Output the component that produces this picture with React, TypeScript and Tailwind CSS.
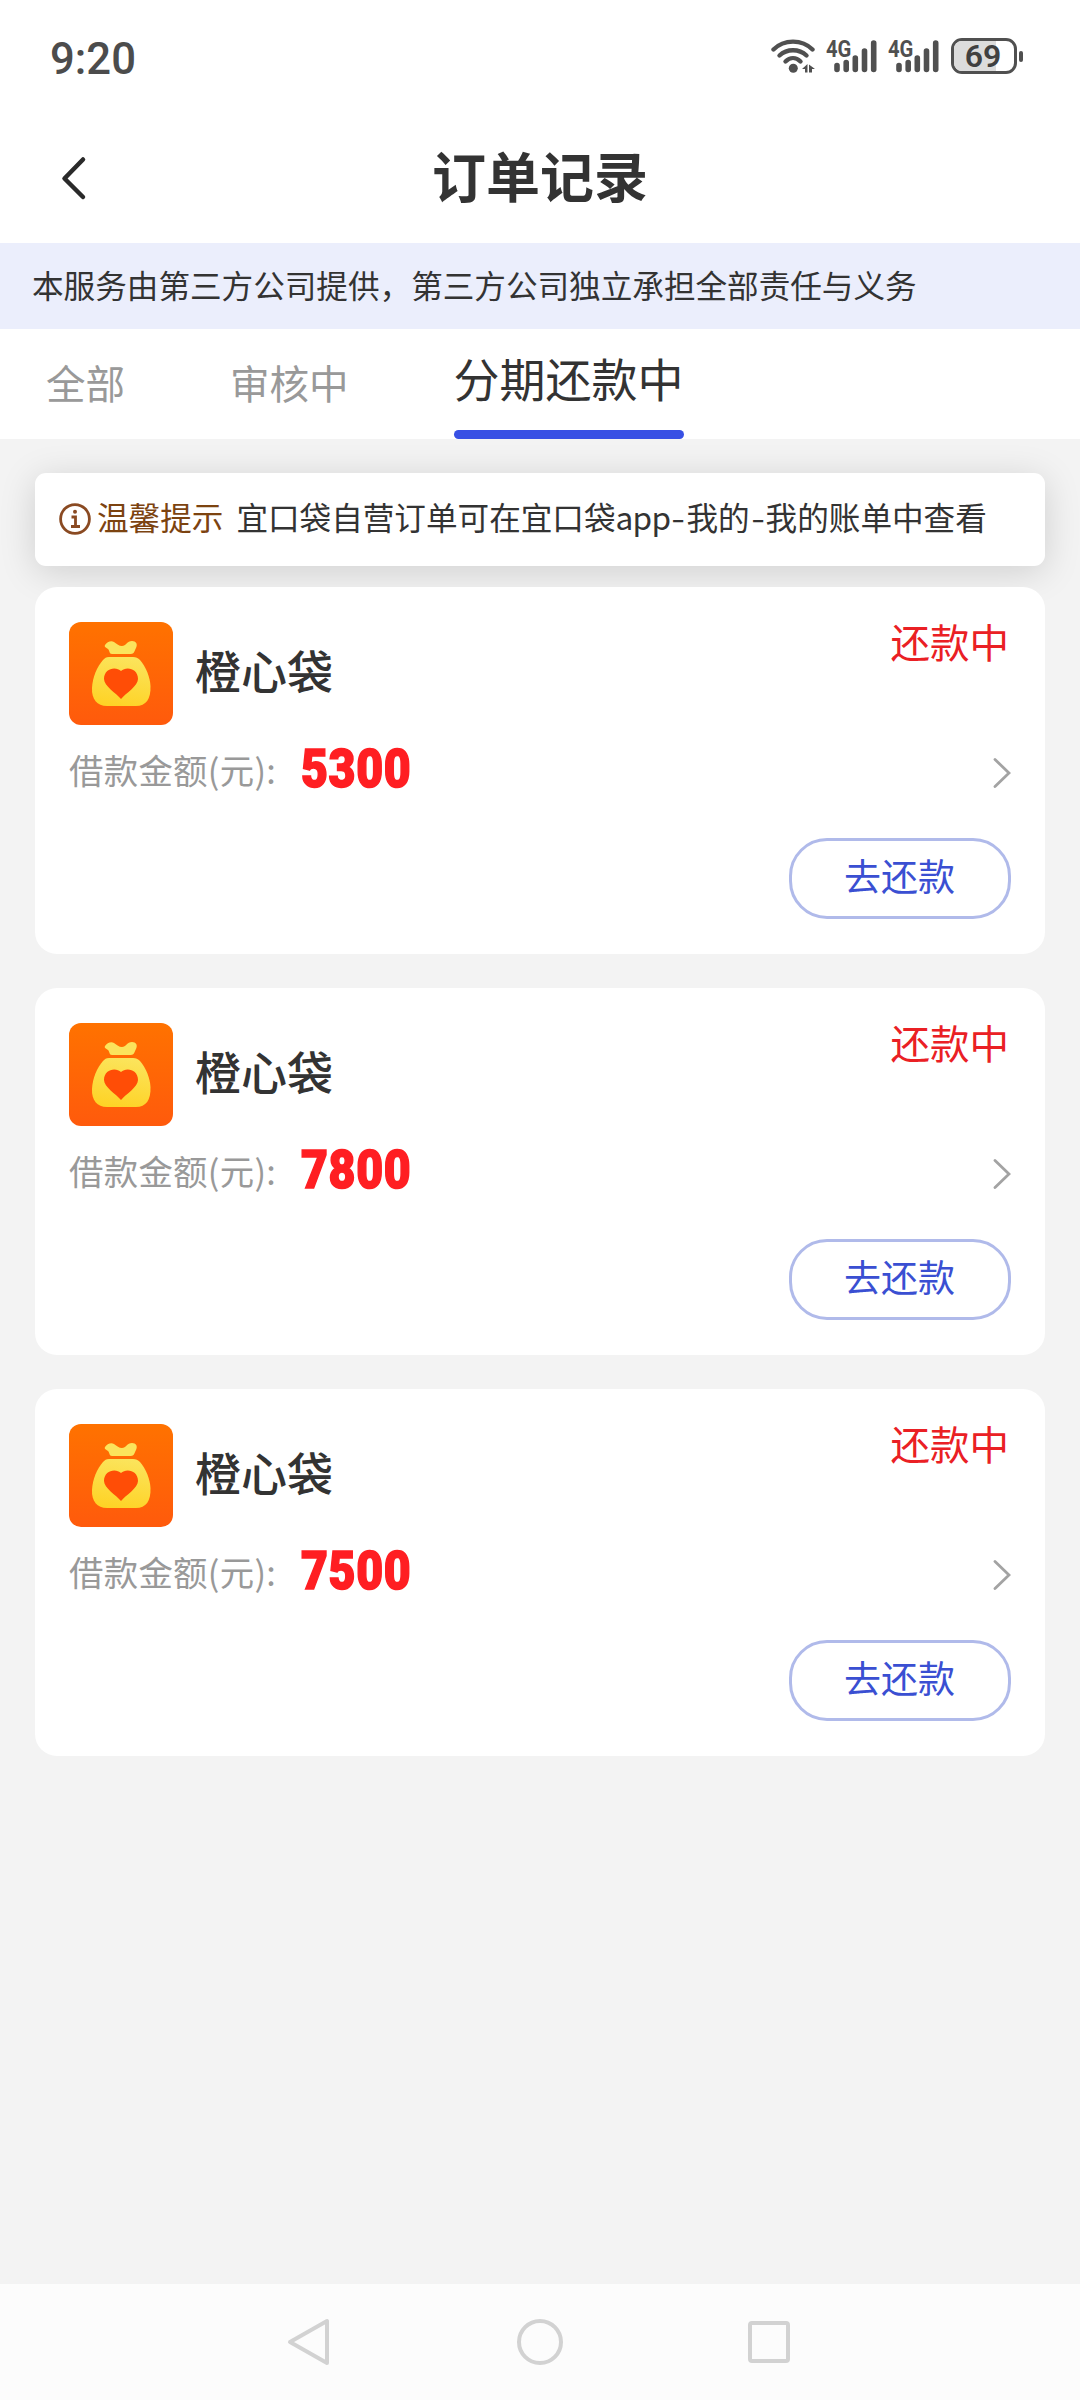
const TABS = ["全部", "审核中", "分期还款中"];

const ORDERS = [
  { id: 1, name: "橙心袋", amount: 5300 },
  { id: 2, name: "橙心袋", amount: 7800 },
  { id: 3, name: "橙心袋", amount: 7500 },
];

function WifiIcon() {
  return (
    <svg width="46" height="38" viewBox="0 0 46 38" fill="none" stroke="#505050" strokeWidth="4.400" strokeLinecap="round">
      <path d="M2.500 12.500C13 2 31 2 41.500 12.500" />
      <path d="M8.500 18.500C16 11.500 28 11.500 35.500 18.500" />
      <path d="M14.500 24.500C19 20 25 20 29.500 24.500" />
      <circle cx="22.300" cy="31.300" r="4.500" fill="#505050" stroke="none" />
      <path d="M31 32l5.500-5v8.500h-2.500v-3.500zM38 27.500l6 4.500h-3v3.500h-3z" fill="#505050" stroke="none" />
    </svg>
  );
}

function Signal() {
  return (
    <div className="relative h-[38px] w-[50px]">
      <svg width="50" height="38" viewBox="0 0 50 38" stroke="#505050" strokeWidth="5.6" strokeLinecap="round">
        <path d="M10 28.500v4M19.200 25.500v7M28.300 21v11.500M37.500 14v18.500M46.700 6v26.500" />
      </svg>
      <span className="absolute -left-px top-[3px] origin-left scale-x-[0.88] font-[Roboto] text-[23px] font-bold leading-[20px] text-[#505050]">4G</span>
    </div>
  );
}

function Battery() {
  return (
    <div className="flex items-center gap-[2px]">
      <div className="relative flex h-9 w-[66px] items-center justify-center overflow-hidden rounded-[11px] border-[3px] border-[#505050]">
        <div className="absolute inset-y-0 left-0 w-[42px] bg-[#dcdcdc]" />
        <span className="relative -left-px font-[Roboto] text-[32px] font-semibold leading-none text-[#404040]">69</span>
      </div>
      <div className="h-[11px] w-1 rounded-full bg-[#505050]" />
    </div>
  );
}

function BagLogo() {
  return (
    <svg width="104" height="103" viewBox="0 0 104 103">
      <defs>
        <linearGradient id="bg" x1="0" y1="0" x2="0" y2="1">
          <stop offset="0" stopColor="#ff7200" />
          <stop offset="1" stopColor="#ff5a0c" />
        </linearGradient>
        <linearGradient id="bag" x1="0.6" y1="0" x2="0.4" y2="1">
          <stop offset="0" stopColor="#fbe45c" />
          <stop offset="1" stopColor="#fed326" />
        </linearGradient>
      </defs>
      <rect width="104" height="103" rx="12" fill="url(#bg)" />
      <path d="M36 23C38 20 42 18 45 20C48 22 50 24 53 24C57 24 58 19 63 19C67 19 69 22 67 26C65.500 29 65 32 62 32H43C40 32 41 29 39 27C37 25.500 35 25 36 23Z" fill="#fbe45c" />
      <path d="M40 35H64C67 35 69 36 71 38C77 45 81 55 81.500 64C82 77 77 84 67 84H38C28 84 22.500 77 23 66C23.500 55 28 45 34 38C36 36 37 35 40 35Z" fill="url(#bag)" />
      <path d="M52 49C57 44 69 46 69 57C69 64 57 71 52 77C47 71 35 64 35 57C35 46 47 44 52 49Z" fill="#ff4d06" />
    </svg>
  );
}

function OrderCard({ name, amount }: { name: string; amount: number }) {
  return (
    <div className="flex h-[367px] flex-col rounded-[22px] bg-white px-[34px] pt-[35px]">
      <div className="flex h-[103px]">
        <BagLogo />
        <h2 className="ml-[22px] mt-[24px] text-[46px] font-medium leading-[46px] text-[#333]">{name}</h2>
        <span className="ml-auto mr-[2px] -mt-px text-[39.5px] leading-[40px] text-[#ea2024]">还款中</span>
      </div>
      <div className="mt-[20px] flex h-[50px] items-center">
        <span className="mb-[3px] w-[228px] whitespace-nowrap text-[34.4px] leading-[50px] tracking-[0.3px] text-[#999]">借款金额(元):</span>
        <span className="mb-[2px] ml-[4px] origin-left scale-x-[0.86] font-[Roboto] text-[54px] font-black leading-[50px] tracking-[0.8px] text-[#ff1e22] [-webkit-text-stroke:1.6px_#ff1e22]">{amount}</span>
        <svg className="ml-auto mt-[6px]" width="18" height="30" viewBox="0 0 18 30" fill="none" stroke="#a3a3a3" strokeWidth="2.8" strokeLinecap="round">
          <path d="M2 1.500L16 15L2 28.500" />
        </svg>
      </div>
      <button className="ml-auto mt-[43px] h-[81px] w-[222px] rounded-[38px] border-[3px] border-[#b0baea] pb-[7px] pr-px text-[37px] leading-none text-[#3a4fd2]">
        去还款
      </button>
    </div>
  );
}

export default function App() {
  return (
    <div className="flex h-[2400px] w-[1080px] flex-col bg-[#f3f3f3] font-['Noto_Sans_CJK_SC',sans-serif]">
      <div className="bg-white">
        <div className="flex h-[112px] items-center justify-between pl-[50px] pr-[57px]">
          <span className="mt-[5px] origin-left scale-x-[0.97] font-[Roboto] text-[45px] font-medium leading-none text-[#4c4c4c]">9:20</span>
          <div className="flex items-center">
            <WifiIcon />
            <div className="ml-[10px] flex gap-[12px]">
              <Signal />
              <Signal />
            </div>
            <div className="ml-[12px]">
              <Battery />
            </div>
          </div>
        </div>
        <div className="grid h-[131px] grid-cols-[120px_1fr_120px] items-center">
          <svg className="ml-[60px]" width="28" height="46" viewBox="0 0 28 46" fill="none" stroke="#2a2a2a" strokeWidth="4.500" strokeLinecap="round" strokeLinejoin="round">
            <path d="M23 4.500L4.500 23.500L23 42" />
          </svg>
          <h1 className="pb-[5px] text-center text-[54px] font-bold leading-none text-[#333]">订单记录</h1>
        </div>
      </div>

      <div className="flex h-[86px] items-center bg-[#ebeefc] pb-[3px] pl-8 text-[31.6px] text-[#333]">
        本服务由第三方公司提供，第三方公司独立承担全部责任与义务
      </div>

      <div className="flex h-[110px] items-center gap-[105px] bg-white pl-[46px]">
        {TABS.map((tab, i) =>
          i === 2 ? (
            <div key={tab} className="flex h-full flex-col justify-between pt-[25px] text-[46px] leading-[46px] text-[#333]">
              {tab}
              <div className="h-[9px] rounded-full bg-[#3850e4]" />
            </div>
          ) : (
            <div key={tab} className="pb-[5px] text-[39.5px] leading-[40px] text-[#999]">{tab}</div>
          )
        )}
      </div>

      <div className="px-[35px] pt-[34px]">
        <div className="flex h-[93px] items-center rounded-[11px] bg-white pl-6 text-[31.6px] leading-none text-[#333] shadow-[0_6px_36px_rgba(0,0,0,0.15)]">
          <svg className="mb-[2px]" width="32" height="32" viewBox="0 0 32 32" fill="none" stroke="#8a4a22" strokeWidth="2.800">
            <circle cx="16" cy="16" r="14.400" />
            <path d="M12.500 14H16.500V23.500M12 23.500H21" />
            <circle cx="16" cy="8.800" r="2" fill="#8a4a22" stroke="none" />
          </svg>
          <span className="mb-[6px] ml-[6px] text-[#7c4310]">温馨提示</span>
          <span className="mb-[6px] ml-[13px] whitespace-nowrap">
            宜口袋自营订单可在宜口袋<span className="tracking-[-0.7px]">app</span>
            <span className="inline-block w-[16px] scale-x-125 text-center">-</span>我的
            <span className="inline-block w-[16px] scale-x-125 text-center">-</span>我的账单中查看
          </span>
        </div>
      </div>

      <div className="relative flex flex-1 flex-col gap-[34px] px-[35px] pt-[21px]">
        {ORDERS.map((order) => (
          <OrderCard key={order.id} name={order.name} amount={order.amount} />
        ))}
      </div>

      <div className="flex h-[116px] items-center justify-between bg-[#fcfcfc] pl-[286px] pr-[286px]">
        <svg width="48" height="48" viewBox="0 0 48 48" fill="none" stroke="#d2d2d2" strokeWidth="4" strokeLinejoin="round">
          <path d="M41 3V45L4 24Z" />
        </svg>
        <svg width="48" height="48" viewBox="0 0 48 48" fill="none" stroke="#d2d2d2" strokeWidth="4">
          <circle cx="24" cy="24" r="21" />
        </svg>
        <svg width="48" height="48" viewBox="0 0 48 48" fill="none" stroke="#d2d2d2" strokeWidth="4">
          <rect x="4" y="5" width="38" height="38" rx="2" />
        </svg>
      </div>
    </div>
  );
}
